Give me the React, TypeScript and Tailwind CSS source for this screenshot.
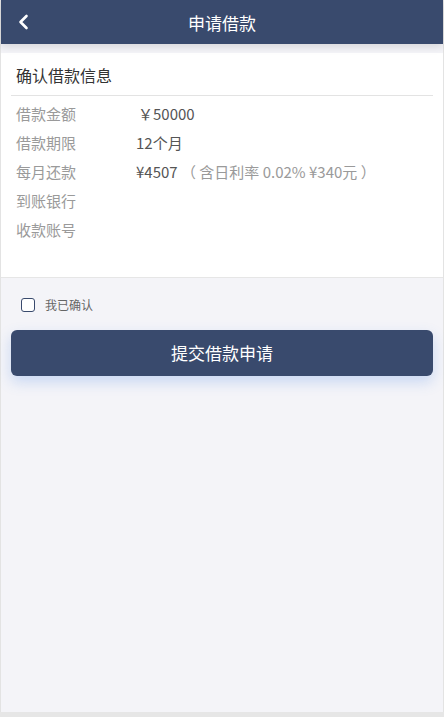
import React from "react";

const rows: { label: string; value?: React.ReactNode }[] = [
  { label: "借款金额", value: <span className="pl-[2px]">￥50000</span> },
  { label: "借款期限", value: "12个月" },
  {
    label: "每月还款",
    value: (
      <>
        ¥4507 <span className="text-[#9a9a9a]">（ 含日利率 0.02% ¥340元 ）</span>
      </>
    ),
  },
  { label: "到账银行" },
  { label: "收款账号" },
];

export default function App() {
  return (
    <div
      className="w-[444px] h-[717px] bg-[#e6e6e6] overflow-hidden"
      style={{ fontFamily: '"Noto Sans CJK SC", "Noto Sans", sans-serif' }}
    >
      <div className="h-[712px] bg-[#f4f4f8] border-x border-[#e3e3e3] flex flex-col">
        <header className="relative z-10 h-[44px] bg-[#394a6d] flex items-center justify-center shadow-[0_3px_8px_rgba(0,0,0,0.12)]">
          <svg
            className="absolute left-[16px] top-[14px]"
            width="14"
            height="16"
            viewBox="0 0 14 16"
            fill="none"
          >
            <path d="M9.5 2 L3.5 8 L9.5 14" stroke="#fff" strokeWidth="2.6" strokeLinecap="round" strokeLinejoin="round" />
          </svg>
          <h1 className="text-white text-[17px] leading-none">申请借款</h1>
        </header>

        <section className="mt-[9px] bg-white border-b border-[#e6e6e6] px-[10px] pb-[32px]">
          <div className="pt-[11px] pb-[9px] pl-[5px] border-b border-[#e3e3e3]">
            <h2 className="text-[16px] leading-[22px] text-[#333]">确认借款信息</h2>
          </div>
          <div className="pt-[4px] pl-[5px]">
            {rows.map((r) => (
              <div key={r.label} className="h-[29px] flex items-center text-[15px]">
                <span className="w-[120px] text-[#9a9a9a]">{r.label}</span>
                <span className="text-[#555]">{r.value}</span>
              </div>
            ))}
          </div>
        </section>

        <div className="pt-[20px] px-[10px]">
          <label className="flex items-center h-[14px] pl-[10px] gap-[10px]">
            <span className="w-[14px] h-[14px] rounded-[3px] border-[1.5px] border-[#394a6d] bg-white" />
            <span className="text-[12px] text-[#666]">我已确认</span>
          </label>
          <button className="mt-[18px] w-full h-[46px] rounded-[6px] bg-[#394a6d] text-white text-[17px] shadow-[0_6px_14px_rgba(70,130,230,0.25)]">
            提交借款申请
          </button>
        </div>
      </div>
    </div>
  );
}
